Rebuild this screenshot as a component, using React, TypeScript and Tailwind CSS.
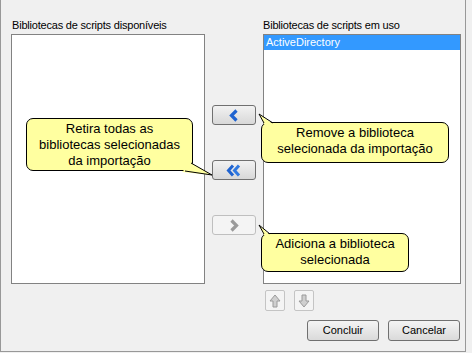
import type { ReactNode } from 'react'

function ArrowButton({ children, disabled }: { children: ReactNode; disabled?: boolean }) {
  return (
    <button
      className={
        disabled
          ? 'flex h-[20px] w-[44px] items-center justify-center rounded-[3px] border border-[#bfbfbf] bg-[#f4f4f4]'
          : 'flex h-[20px] w-[44px] items-center justify-center rounded-[3px] border border-[#707070] bg-gradient-to-b from-[#f2f2f2] to-[#d8d8d8]'
      }
    >
      {children}
    </button>
  )
}

function Chevron({ dir, color }: { dir: 'left' | 'right'; color: string }) {
  return (
    <svg width="10" height="13" viewBox="0 0 10 13">
      <polyline
        points={dir === 'left' ? '7.5,1.5 2.5,6.5 7.5,11.5' : '2.5,1.5 7.5,6.5 2.5,11.5'}
        fill="none"
        stroke={color}
        strokeWidth="3.2"
      />
    </svg>
  )
}

function DoubleChevron() {
  return (
    <svg width="16" height="13" viewBox="0 0 16 13">
      <polyline points="7,1.5 2.5,6.5 7,11.5" fill="none" stroke="#1f63d0" strokeWidth="3" />
      <polyline points="13,1.5 8.5,6.5 13,11.5" fill="none" stroke="#2f78e0" strokeWidth="3" />
    </svg>
  )
}

function MoveButton({ up }: { up?: boolean }) {
  return (
    <button className="flex h-[21px] w-[20px] items-center justify-center rounded-[2px] border border-[#c4c4c4] bg-[#f4f4f4]">
      <svg width="12" height="14" viewBox="0 0 12 14">
        <polygon
          points={up ? '6,1 11,7 8,7 8,13 4,13 4,7 1,7' : '6,13 11,7 8,7 8,1 4,1 4,7 1,7'}
          fill="#cfcfcf"
          stroke="#9a9a9a"
          strokeWidth="1"
        />
      </svg>
    </button>
  )
}

function DialogButton({ label }: { label: string }) {
  return (
    <button className="h-[21px] w-[72px] rounded-[3px] border border-[#707070] bg-gradient-to-b from-[#f4f4f4] to-[#dadada] text-[11px] text-black">
      {label}
    </button>
  )
}

export default function App() {
  return (
    <div className="relative h-[353px] w-[472px] overflow-hidden bg-[#f0f0f0] font-['Liberation_Sans',Arial,sans-serif] text-black">
      <div className="h-[352px] w-[466px] border-r border-b border-l border-[#989898] pt-[16px] pl-[10px]">
        <div className="flex">
          <div className="w-[194px]">
            <p className="h-[18px] pl-px text-[11px] leading-[18px] tracking-[-0.2px]">Bibliotecas de scripts disponíveis</p>
            <div className="h-[250px] border border-[#828282] bg-white" />
          </div>

          <div className="ml-[7px] flex w-[44px] flex-col gap-[35px] pt-[89px]">
            <ArrowButton>
              <Chevron dir="left" color="#1f63d0" />
            </ArrowButton>
            <ArrowButton>
              <DoubleChevron />
            </ArrowButton>
            <ArrowButton disabled>
              <Chevron dir="right" color="#9a9a9a" />
            </ArrowButton>
          </div>

          <div className="ml-[7px] w-[198px]">
            <p className="h-[18px] text-[11px] leading-[18px] tracking-[-0.2px]">Bibliotecas de scripts em uso</p>
            <div className="h-[250px] border border-[#828282] bg-white">
              <div className="h-[15px] bg-[#3399ff] pl-[2px] text-[11px] leading-[15px] text-white">ActiveDirectory</div>
            </div>
            <div className="mt-[6px] flex gap-[9px] pl-[2px]">
              <MoveButton up />
              <MoveButton />
            </div>
            <div className="mt-[9px] flex justify-end gap-[9px] pr-px">
              <DialogButton label="Concluir" />
              <DialogButton label="Cancelar" />
            </div>
          </div>
        </div>
      </div>

      {/* callouts */}
      <div className="absolute top-[118px] left-[26px] flex h-[53px] w-[167px] flex-col items-center rounded-[7px] border border-black bg-[#ffffa0] pt-[2px] text-[13px] leading-[16px]">
        <span>Retira todas as</span>
        <span>bibliotecas selecionadas</span>
        <span>da importação</span>
      </div>
      <div className="absolute top-[122px] left-[261px] flex h-[41px] w-[188px] flex-col items-center rounded-[7px] border border-black bg-[#ffffa0] pt-[2px] text-[13px] leading-[16px]">
        <span>Remove a biblioteca</span>
        <span>selecionada da importação</span>
      </div>
      <div className="absolute top-[233px] left-[261px] flex h-[39px] w-[148px] flex-col items-center rounded-[7px] border border-black bg-[#ffffa0] pt-[2px] text-[13px] leading-[16px]">
        <span>Adiciona a biblioteca</span>
        <span>selecionada</span>
      </div>
      <svg className="absolute top-0 left-0" width="472" height="353">
        <polygon points="188,161 212,175 182,172 186,168" fill="#ffffa0" />
        <polyline points="191,163 212,175 185,171" fill="none" stroke="#000" strokeWidth="1" />
        <polygon points="259,114 264,124 273,124" fill="#ffffa0" />
        <polyline points="264,123 259,114 273,123" fill="none" stroke="#000" strokeWidth="1" />
        <polygon points="259,225 264,235 270,235" fill="#ffffa0" />
        <polyline points="264,234 259,225 270,234" fill="none" stroke="#000" strokeWidth="1" />
      </svg>
    </div>
  )
}
